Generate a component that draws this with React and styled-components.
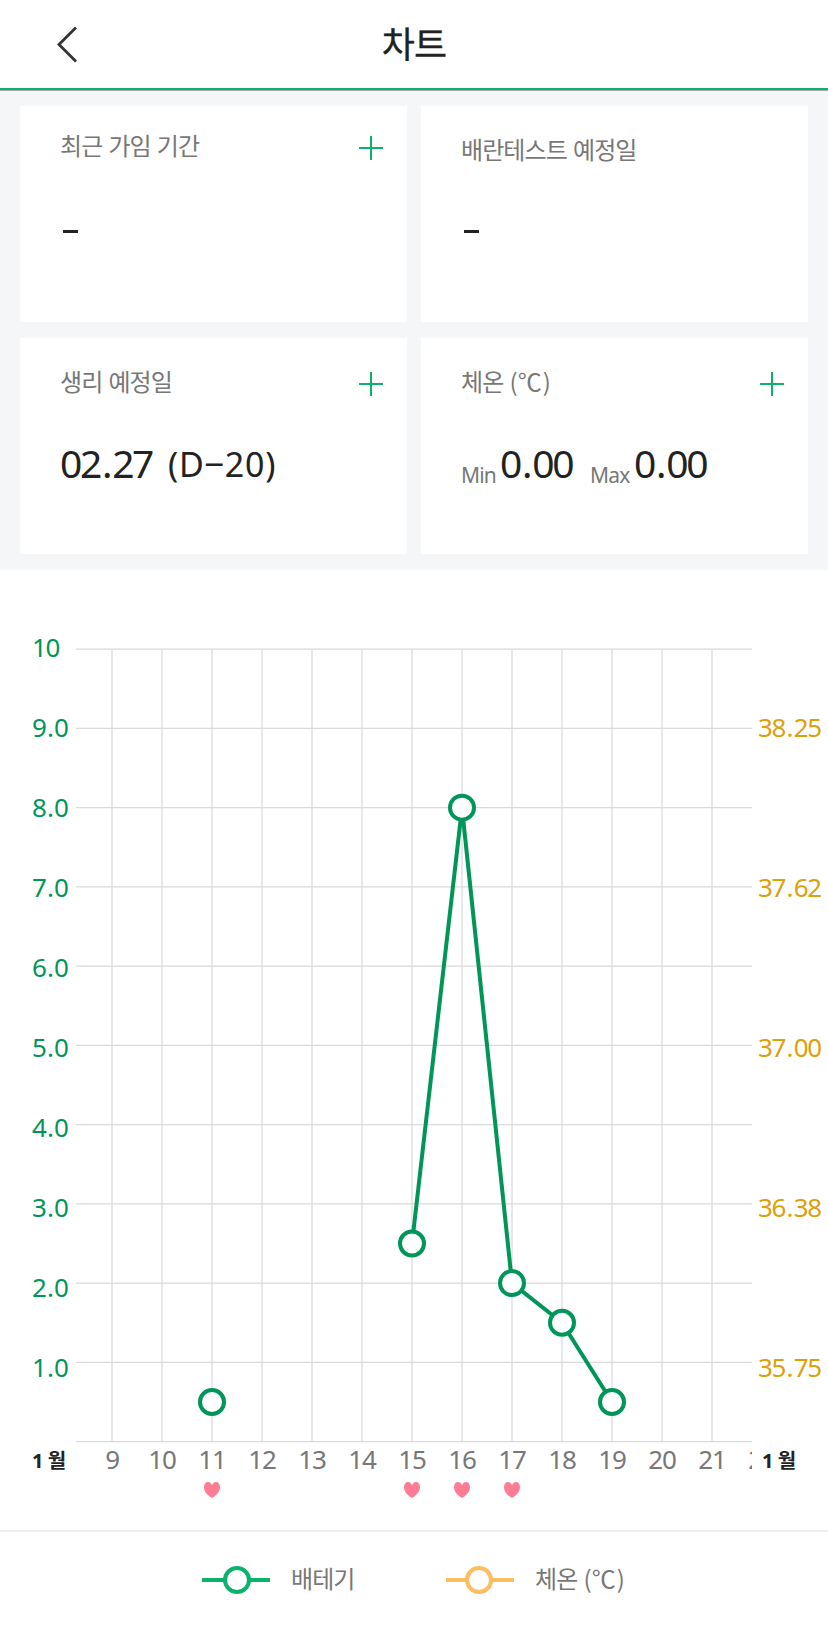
import styled, { createGlobalStyle } from 'styled-components';

const GlobalStyle = createGlobalStyle`
  * {
    box-sizing: border-box;
  }
  body {
    margin: 0;
    background: #fff;
    font-family: 'Noto Sans', 'Noto Sans CJK KR', sans-serif;
    color: #222;
  }
`;

const Page = styled.div`
  width: 828px;
  height: 1634px;
  overflow: hidden;
  background: #fff;
`;

const Header = styled.header`
  display: grid;
  grid-template-columns: 120px 1fr 120px;
  align-items: center;
  height: 91px;
  border-bottom: 1px solid #a9a9ae;
  box-shadow: inset 0 -2px 0 #0ab26c;
`;

const BackButton = styled.button`
  display: flex;
  padding: 0 0 2px 56px;
  border: 0;
  background: none;
`;

const Title = styled.h1`
  margin: 0;
  padding-bottom: 1px;
  font-size: 36px;
  font-weight: 400;
  line-height: 44px;
  letter-spacing: -0.8px;
  text-align: center;
  -webkit-text-stroke: 0.3px #222;
`;

const Summary = styled.section`
  display: grid;
  grid-template-columns: 387px 387px;
  grid-auto-rows: 216px;
  gap: 16px 14px;
  height: 479px;
  padding: 15px 20px 16px;
  background: #f4f6f8;
`;

const Card = styled.div`
  padding: ${({ $top }) => $top}px 24px 0 40px;
  background: #fff;
`;

const CardHead = styled.div`
  display: flex;
  justify-content: space-between;
  height: 32px;
`;

const Label = styled.span`
  color: #777;
  font-family: 'Noto Sans CJK KR', sans-serif;
  font-size: 24px;
  line-height: 26px;
  letter-spacing: -0.9px;
  word-spacing: 1.6px;
  white-space: pre;
`;

const Celsius = styled.span`
  padding: 0 2px 0 1px;
`;

const AddButton = styled.button`
  width: 24px;
  height: 24px;
  margin-top: 4px;
  padding: 0;
  border: 0;
  background: linear-gradient(#0ab26c, #0ab26c) center / 24px 2px no-repeat,
    linear-gradient(#0ab26c, #0ab26c) center / 2px 24px no-repeat;
`;

const Values = styled.div`
  display: flex;
  align-items: baseline;
  margin-top: ${({ $gap }) => $gap}px;
  line-height: 50px;
  white-space: nowrap;
`;

const Dash = styled.span`
  width: 15px;
  height: 3px;
  margin-left: 3px;
  background: #222;
`;

const Value = styled.span`
  width: ${({ $width }) => $width}px;
  font-size: 39px;
  letter-spacing: -2.4px;
`;

const DDay = styled.span`
  position: relative;
  top: -1px;
  font-size: 34px;
  letter-spacing: 0.8px;
`;

const Unit = styled.span`
  position: relative;
  top: 5px;
  width: ${({ $width }) => $width}px;
  color: #777;
  font-size: 21px;
  letter-spacing: -0.8px;
`;

const Dot = styled.span`
  padding: 0 0.055em;
`;

const ChartSection = styled.section`
  display: grid;
  grid-template-columns: 76px 676px 76px;
  height: 960px;
  padding-top: 39px;
`;

const Axis = styled.div`
  display: flex;
  flex-direction: column;
  padding-left: ${({ $left }) => $left}px;
  color: ${({ $color }) => $color};
`;

const Tick = styled.span`
  height: 80px;
  font-size: 26px;
  line-height: 76px;
  letter-spacing: -1.3px;
  white-space: nowrap;
`;

const Month = styled.span`
  padding-left: ${({ $left }) => $left || 0}px;
  margin-top: 37px;
  color: #222;
  font-size: 20px;
  font-weight: 700;
  line-height: 30px;
  letter-spacing: -0.4px;
  white-space: nowrap;
`;

const Plot = styled.div`
  overflow: hidden;
`;

const Graph = styled.svg`
  display: block;
`;

const Days = styled.div`
  display: flex;
  padding-left: 11px;
`;

const Day = styled.div`
  display: flex;
  flex: 0 0 50px;
  flex-direction: column;
  align-items: center;
  gap: 7px;
  color: #777;
  font-size: 26px;
  line-height: 32px;
  letter-spacing: -1.2px;
`;

const Legend = styled.footer`
  display: flex;
  height: 104px;
  padding: 34px 0 0 202px;
  border-top: 2px solid #eee;
`;

const LegendItem = styled.div`
  display: flex;
  width: 244px;
  gap: 21px;
`;

const LegendLabel = styled(Label)`
  line-height: 23px;
`;

const LINE_COLOR = '#009559';
const PLOT_TOP = 40.2;
const STEP = 79.24;

const leftTicks = ['10', '9.0', '8.0', '7.0', '6.0', '5.0', '4.0', '3.0', '2.0', '1.0'];
const rightTicks = ['', '38.25', '', '37.62', '', '37.00', '', '36.38', '', '35.75'];
const days = [9, 10, 11, 12, 13, 14, 15, 16, 17, 18, 19, 20, 21, 22];
const heartDays = [11, 15, 16, 17];
const series = [
  [{ day: 11, value: 0.5 }],
  [
    { day: 15, value: 2.5 },
    { day: 16, value: 8 },
    { day: 17, value: 2 },
    { day: 18, value: 1.5 },
    { day: 19, value: 0.5 },
  ],
];

const getX = (day) => 36 + (day - 9) * 50;
const getY = (value) => PLOT_TOP + (10 - value) * STEP;

function Decimal({ text }) {
  const [whole, fraction] = text.split('.');
  if (!fraction) return whole;
  return (
    <>
      {whole}
      <Dot>.</Dot>
      {fraction}
    </>
  );
}

function Heart() {
  return (
    <svg width="16" height="16" viewBox="0 0 16 16">
      <path
        d="M8 16C5.2 14.4 0 10.4 0 5.2C0 2 1.6 0 4 0C6 0 7.4 1.4 8 3.2C8.6 1.4 10 0 12 0C14.4 0 16 2 16 5.2C16 10.4 10.8 14.4 8 16Z"
        fill="#ff7d94"
      />
    </svg>
  );
}

function LegendMark({ color, cx }) {
  return (
    <svg width="68" height="28">
      <path d="M0 14H68" stroke={color} strokeWidth="4" />
      <circle cx={cx} cy="14" r="12" fill="#fff" stroke={color} strokeWidth="4" />
    </svg>
  );
}

function Chart() {
  return (
    <Graph width="676" height="834">
      {days.slice(0, 13).map((day) => (
        <path key={day} d={`M${getX(day)} ${PLOT_TOP}V${getY(0)}`} stroke="#e8e8e8" strokeWidth="2" />
      ))}
      {Array.from({ length: 11 }, (_, value) => (
        <path key={value} d={`M0 ${getY(value)}H676`} stroke="#dadada" strokeWidth="1.3" />
      ))}
      {series.map((points, index) => (
        <g key={index} fill="none" stroke={LINE_COLOR} strokeWidth="4">
          <polyline points={points.map((p) => `${getX(p.day)},${getY(p.value)}`).join(' ')} strokeLinejoin="bevel" />
          {points.map((p) => (
            <circle key={p.day} cx={getX(p.day)} cy={getY(p.value)} r="12" fill="#fff" />
          ))}
        </g>
      ))}
    </Graph>
  );
}

export default function App() {
  return (
    <Page>
      <GlobalStyle />
      <Header>
        <BackButton aria-label="back">
          <svg width="22" height="37" viewBox="0 0 22 37">
            <path d="M20 1.5L3 18.5L20 35.5" fill="none" stroke="#333" strokeWidth="2.8" />
          </svg>
        </BackButton>
        <Title>차트</Title>
      </Header>
      <Summary>
        <Card $top={26}>
          <CardHead>
            <Label>최근 가임 기간</Label>
            <AddButton aria-label="add" />
          </CardHead>
          <Values $gap={66}>
            <Dash />
          </Values>
        </Card>
        <Card $top={30}>
          <CardHead>
            <Label>배란테스트 예정일</Label>
          </CardHead>
          <Values $gap={62}>
            <Dash />
          </Values>
        </Card>
        <Card $top={30}>
          <CardHead>
            <Label>생리 예정일</Label>
            <AddButton aria-label="add" />
          </CardHead>
          <Values $gap={38}>
            <Value $width={108}>
              <Decimal text="02.27" />
            </Value>
            <DDay>(D‒20)</DDay>
          </Values>
        </Card>
        <Card $top={30}>
          <CardHead>
            <Label>
              체온 (<Celsius>℃</Celsius>)
            </Label>
            <AddButton aria-label="add" />
          </CardHead>
          <Values $gap={38}>
            <Unit $width={39}>Min</Unit>
            <Value $width={90}>
              <Decimal text="0.00" />
            </Value>
            <Unit $width={44}>Max</Unit>
            <Value $width={90}>
              <Decimal text="0.00" />
            </Value>
          </Values>
        </Card>
      </Summary>
      <ChartSection>
        <Axis $left={32} $color="#009559">
          {leftTicks.map((tick) => (
            <Tick key={tick}>
              <Decimal text={tick} />
            </Tick>
          ))}
          <Month>1 월</Month>
        </Axis>
        <Plot>
          <Chart />
          <Days>
            {days.map((day) => (
              <Day key={day}>
                {day}
                {heartDays.includes(day) && <Heart />}
              </Day>
            ))}
          </Days>
        </Plot>
        <Axis $left={6} $color="#dca00a">
          {rightTicks.map((tick, index) => (
            <Tick key={index}>
              <Decimal text={tick} />
            </Tick>
          ))}
          <Month $left={4}>1 월</Month>
        </Axis>
      </ChartSection>
      <Legend>
        <LegendItem>
          <LegendMark color="#0ab26c" cx={35} />
          <LegendLabel>배테기</LegendLabel>
        </LegendItem>
        <LegendItem>
          <LegendMark color="#ffbd62" cx={33} />
          <LegendLabel>
            체온 (<Celsius>℃</Celsius>)
          </LegendLabel>
        </LegendItem>
      </Legend>
    </Page>
  );
}
